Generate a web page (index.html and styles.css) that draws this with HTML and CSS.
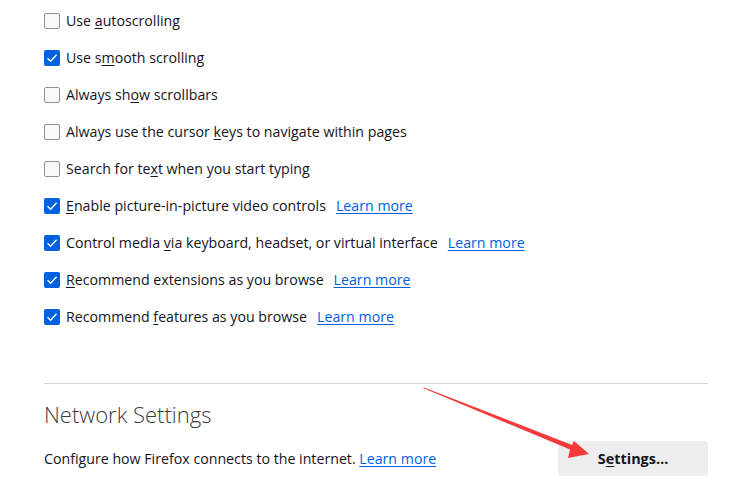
FILE: index.html
```html
<!DOCTYPE html>
<html>
<head>
<meta charset="utf-8">
<link rel="stylesheet" href="styles.css">
</head>
<body>
<div class="page">
  <div class="options">
    <label class="row"><span class="cb"></span><span class="lbl">Use <u>a</u>utoscrolling</span></label>
    <label class="row"><span class="cb on"></span><span class="lbl">Use s<u>m</u>ooth scrolling</span></label>
    <label class="row"><span class="cb"></span><span class="lbl">Always sh<u>o</u>w scrollbars</span></label>
    <label class="row"><span class="cb"></span><span class="lbl">Always use the cursor <u>k</u>eys to navigate within pages</span></label>
    <label class="row"><span class="cb"></span><span class="lbl">Search for te<u>x</u>t when you start typing</span></label>
    <label class="row"><span class="cb on"></span><span class="lbl"><u>E</u>nable picture-in-picture video controls</span><a class="link">Learn more</a></label>
    <label class="row"><span class="cb on"></span><span class="lbl">Control media <u>v</u>ia keyboard, headset, or virtual interface</span><a class="link">Learn more</a></label>
    <label class="row"><span class="cb on"></span><span class="lbl"><u>R</u>ecommend extensions as you browse</span><a class="link">Learn more</a></label>
    <label class="row"><span class="cb on"></span><span class="lbl">Recommend <u>f</u>eatures as you browse</span><a class="link">Learn more</a></label>
  </div>
  <hr class="sep">
  <h2 class="heading">Network Settings</h2>
  <div class="netrow">
    <p class="desc">Configure how Firefox connects to the internet. <a class="link">Learn more</a></p>
    <button class="btn">S<u>e</u>ttings…</button>
  </div>
</div>
<svg class="arrow" width="750" height="490" viewBox="0 0 750 490">
  <polygon points="423,388 424,387.4 572,445 574,441 589,454 568,458 570,449.5" fill="#f33b3b"/>
</svg>
</body>
</html>
```
FILE: styles.css
```css
html, body {
  margin: 0;
  padding: 0;
  background: #fff;
}
body {
  font-family: "Open Sans", "Noto Sans", sans-serif;
  font-size: 14.2px;
  color: #15141a;
  width: 750px;
  height: 490px;
  overflow: hidden;
  position: relative;
}
.page {
  padding: 2px 42px 0 44px;
}
.options {
  display: flex;
  flex-direction: column;
}
.row {
  height: 37px;
  display: flex;
  align-items: center;
}
.cb {
  box-sizing: border-box;
  width: 16px;
  height: 16px;
  border: 1px solid #8f8f9d;
  border-radius: 2px;
  background: #f9f9fb;
  margin-right: 6px;
  flex: none;
}
.cb.on {
  border: none;
  background: #0061e0 url("data:image/svg+xml;utf8,<svg xmlns='http://www.w3.org/2000/svg' width='16' height='16'><path d='M3.5 8.2 L6.6 11.2 L12.6 4.8' fill='none' stroke='white' stroke-width='1.4'/></svg>") no-repeat center;
}
u {
  text-underline-offset: 2px;
}
.lbl {
  white-space: nowrap;
}
.link {
  color: #0061e0;
  text-decoration: underline;
  text-underline-offset: 2px;
  margin-left: 10px;
  white-space: nowrap;
}
.sep {
  margin: 48px 0 0 0;
  border: none;
  border-top: 1px solid #d7d7db;
  height: 0;
}
.heading {
  margin: 15px 0 0 0;
  font-size: 22px;
  font-weight: 300;
  color: #3b3b40;
  line-height: 30px;
}
.netrow {
  display: flex;
  align-items: center;
  justify-content: space-between;
  margin-top: 12px;
}
.desc {
  margin: 0;
}
.desc .link {
  margin-left: 0;
}
.btn {
  width: 150px;
  height: 35px;
  border: none;
  border-radius: 4px;
  background: #ededf0;
  font-family: inherit;
  font-size: 14.4px;
  font-weight: 700;
  color: #15141a;
  padding: 0;
}
.arrow {
  position: absolute;
  left: 0;
  top: 0;
  pointer-events: none;
}
```
